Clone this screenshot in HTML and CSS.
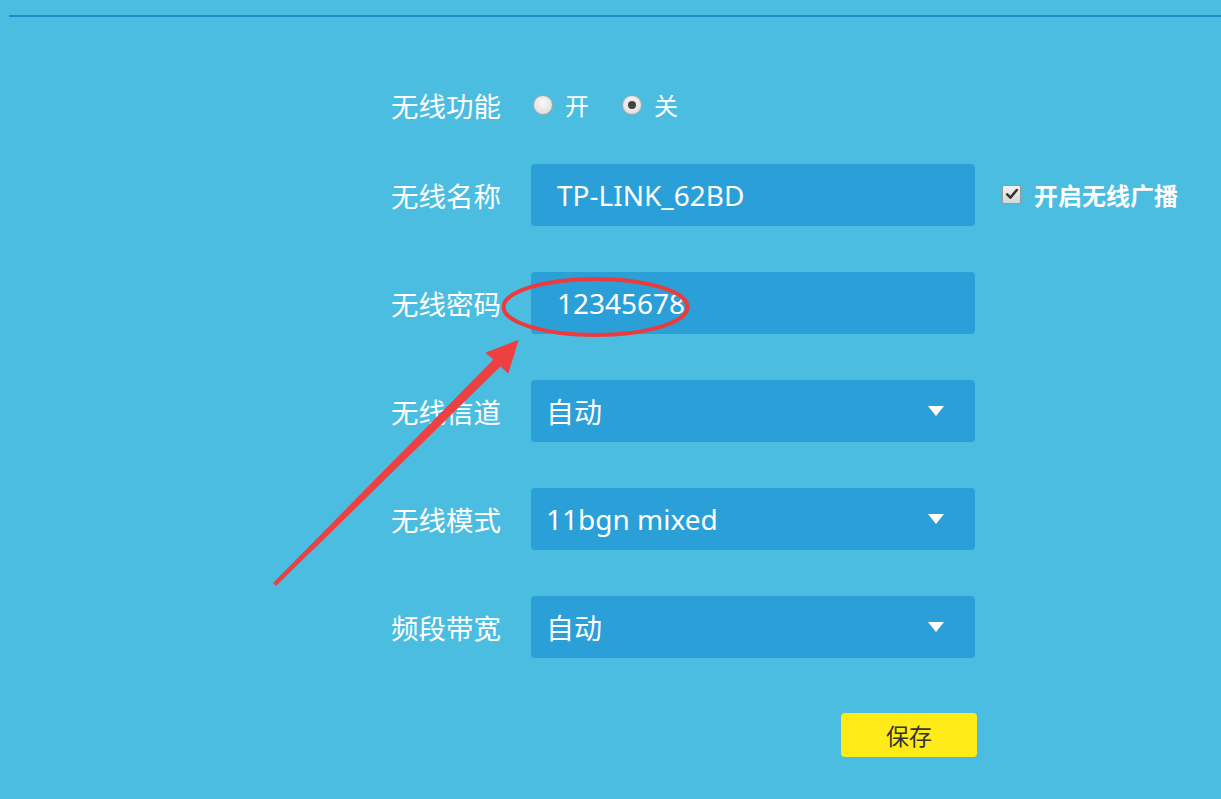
FILE: index.html
```html
<!DOCTYPE html>
<html lang="zh">
<head>
<meta charset="utf-8">
<link rel="stylesheet" href="styles.css">
</head>
<body>
<div class="page">
  <div class="rule"></div>
  <div class="form">
    <div class="row radio-row">
      <div class="label">无线功能</div>
      <div class="radios">
        <span class="radio"></span><span class="opt">开</span>
        <span class="radio checked"></span><span class="opt">关</span>
      </div>
    </div>
    <div class="row">
      <div class="label">无线名称</div>
      <div class="field input">TP-LINK_62BD</div>
      <div class="check-wrap">
        <span class="checkbox"><svg viewBox="0 0 20 20" width="20" height="20"><path d="M4 10.5 L8 14.5 L16 5" fill="none" stroke="#333" stroke-width="3.2" stroke-linecap="round" stroke-linejoin="round"/></svg></span>
        <span class="check-text">开启无线广播</span>
      </div>
    </div>
    <div class="row">
      <div class="label">无线密码</div>
      <div class="field input">12345678</div>
    </div>
    <div class="row">
      <div class="label">无线信道</div>
      <div class="field select"><span>自动</span><span class="tri"></span></div>
    </div>
    <div class="row">
      <div class="label">无线模式</div>
      <div class="field select"><span>11bgn mixed</span><span class="tri"></span></div>
    </div>
    <div class="row">
      <div class="label">频段带宽</div>
      <div class="field select"><span>自动</span><span class="tri"></span></div>
    </div>
    <div class="actions">
      <button class="save">保存</button>
    </div>
  </div>
  <svg class="annot" width="1221" height="799" viewBox="0 0 1221 799">
    <ellipse cx="595.5" cy="307" rx="92" ry="28" fill="none" stroke="#EE3A3A" stroke-width="4"/>
    <polygon points="273.5,583 494,359.5 486,353 518,340.5 508,373 500.5,366 276,585.5" fill="#EE4040" stroke="#EE4040" stroke-width="1" stroke-linejoin="round"/>
  </svg>
</div>
</body>
</html>
```
FILE: styles.css
```css
html, body {
  margin: 0;
  padding: 0;
}
body {
  background: #4BBDE0;
  font-family: "Noto Sans", "Noto Sans CJK SC", sans-serif;
  color: #fff;
}
.page {
  position: relative;
  width: 1221px;
  height: 799px;
  overflow: hidden;
}
.rule {
  margin: 15px 0 0 9px;
  height: 2px;
  background: #1A8CCD;
}
.form {
  padding: 71px 0 0 391px;
}
.row {
  display: flex;
  align-items: center;
  height: 62px;
  margin-bottom: 46px;
}
.radio-row {
  height: 34px;
  margin-bottom: 42px;
}
.label {
  width: 140px;
  font-family: "Noto Sans CJK SC", sans-serif;
  font-size: 27.5px;
  line-height: 34px;
}
.radios {
  display: flex;
  align-items: center;
}
.radio {
  width: 20px;
  height: 20px;
  border-radius: 50%;
  background: radial-gradient(circle at 50% 40%, #fafafa, #d6d6d6);
  border: 1px solid #a8a8a8;
  box-sizing: border-box;
  margin-left: 2px;
  position: relative;
}
.radio.checked::after {
  content: "";
  position: absolute;
  left: 5px;
  top: 5px;
  width: 8px;
  height: 8px;
  border-radius: 50%;
  background: #444;
}
.opt {
  font-family: "Noto Sans CJK SC", sans-serif;
  font-size: 24px;
  margin: 0 31px 0 12px;
  line-height: 30px;
}
.field {
  width: 444px;
  height: 62px;
  box-sizing: border-box;
  background: #2B9FD8;
  border-radius: 4px;
  display: flex;
  align-items: center;
}
.input {
  padding-left: 26px;
  font-size: 28px;
  font-family: "Noto Sans", "Noto Sans CJK SC", sans-serif;
}
.select {
  padding-left: 15px;
  justify-content: space-between;
  padding-right: 31px;
  font-size: 28px;
  font-family: "Noto Sans", "Noto Sans CJK SC", sans-serif;
}
.tri {
  width: 0;
  height: 0;
  border-left: 8px solid transparent;
  border-right: 8px solid transparent;
  border-top: 10px solid #fff;
}
.check-wrap {
  display: flex;
  align-items: center;
  margin-left: 27px;
  margin-top: -2px;
}
.checkbox {
  width: 19px;
  height: 19px;
  box-sizing: border-box;
  border: 1px solid #999;
  border-radius: 2px;
  background: linear-gradient(#f2f2f2, #d8d8d8);
  display: flex;
  align-items: center;
  justify-content: center;
}
.checkbox svg {
  width: 16px;
  height: 16px;
}
.check-text {
  font-family: "Noto Sans CJK SC", sans-serif;
  font-weight: 700;
  font-size: 24px;
  margin-left: 13px;
}
.actions {
  padding-left: 450px;
  margin-top: 9px;
  padding-top: 9px;
}
.save {
  width: 136px;
  height: 44px;
  border: none;
  border-radius: 4px;
  background: #FFEB18;
  color: #333;
  font-family: "Noto Sans CJK SC", sans-serif;
  font-size: 23px;
  padding: 0;
}
.annot {
  position: absolute;
  left: 0;
  top: 0;
  pointer-events: none;
}
```
